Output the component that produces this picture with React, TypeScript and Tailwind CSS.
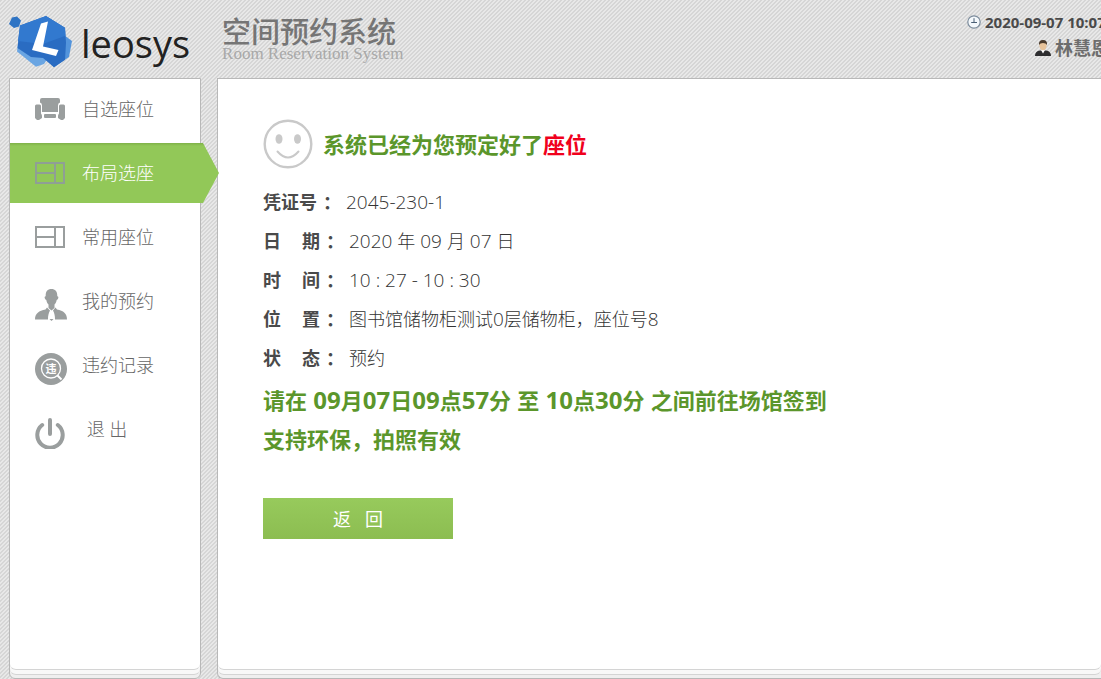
import React from 'react';
import { clsx } from 'clsx';

const SofaIcon = () => (
  <svg viewBox="0 0 30 22" className="w-[30px] h-[22px]" fill="#9a9e9e">
    <path d="M7 0h16q2 0 2 2v2.500q-2 .5-2 3V14H7V7.500q0-2.500-2-3V2q0-2 2-2z" />
    <path d="M1.500 6.500h3q1.500 0 1.500 1.500v7.500q1 1 1 2.500v2l-3 2H2l-2-2V8q0-1.500 1.500-1.500zM28.500 6.500h-3Q24 6.500 24 8v7.500q-1 1-1 2.500v2l3 2h2l2-2V8q0-1.500-1.500-1.500z" />
    <rect x="9" y="16" width="12" height="4" rx="1" />
  </svg>
);

const LayoutIcon = ({ color = '#9a9e9e' }: { color?: string }) => (
  <svg viewBox="0 0 30 22" className="w-[30px] h-[22px]" fill="none" stroke={color} strokeWidth="2">
    <path d="M1 1h28v20H1zM20 1v20M1 11h19" />
  </svg>
);

const PersonIcon = () => (
  <svg viewBox="0 0 32 32" className="w-8 h-8" fill="#9a9e9e">
    <path d="M16.500 0c3.500 0 6 2.500 5.800 7.200 1.200 0 1.300 1.300.8 2.300-.4 1-.9 1.300-1.400 1.500-.4 2-1.200 3.500-2.200 4.500v3.500l-3 2.500-3-2.500v-3.500c-1-1-1.800-2.500-2.200-4.500-.5-.2-1-.5-1.400-1.500-.5-1-.4-2.300.8-2.300C10.500 2.500 12.500 0 16.500 0z" />
    <path d="M12 18.500l-1.500 2C4 22 0 24 0 30.500h13c0-4 .5-6 2-9zM20.500 18.500l1.500 2c6.500 1.500 10 3.500 10 10H20c0-4-.5-6-2-9zM14.500 30h4l-2 2z" />
  </svg>
);

const RecordIcon = () => (
  <svg viewBox="0 0 32 32" className="w-8 h-8">
    <circle cx="16" cy="16" r="16" fill="#9a9e9e" />
    <circle cx="16" cy="15.500" r="9.500" fill="none" stroke="#fff" strokeWidth="1.300" />
    <path d="M22.500 22.500l4 4" stroke="#fff" strokeWidth="2" />
    <text x="16" y="19.500" textAnchor="middle" fontSize="11" fontWeight="bold" fill="#fff">违</text>
  </svg>
);

const PowerIcon = () => (
  <svg viewBox="0 0 30 31" className="w-[30px] h-[31px]" fill="none" stroke="#9a9e9e" strokeWidth="4" strokeLinecap="round">
    <path d="M15 2v14M7.200 7a12.700 12.700 0 1 0 15.600 0" />
  </svg>
);

const SmileIcon = () => (
  <svg viewBox="0 0 50 50" className="w-[50px] h-[50px]" fill="none" stroke="#c9c9c9">
    <circle cx="25" cy="25" r="23.300" strokeWidth="2.400" />
    <ellipse cx="16" cy="20" rx="3.500" ry="4.800" fill="#c9c9c9" stroke="none" />
    <ellipse cx="34.500" cy="20" rx="3.500" ry="4.800" fill="#c9c9c9" stroke="none" />
    <path d="M14.500 32.500q10.500 12 21 0" strokeWidth="2" strokeLinecap="round" />
  </svg>
);

const LogoMark = () => (
  <svg viewBox="0 0 64 52" className="w-16 h-[52px] shrink-0">
    <path d="M3 1.500l5-1 4 4-2 6-5 1.500L0 8z" fill="#2f74c4" />
    <path d="M10 20L8 35.500l19 15.200 8-2.700 4-6-5-14z" fill="#6aa5e2" />
    <path d="M55 19l8 6-3 16-15 10.300-8-8z" fill="#5394dc" />
    <path d="M11 9.500L37 0l19 11.700 1 15-1 17-11 7.600L34 42l-12-1-13.500-9z" fill="#2a6cc2" />
    <path d="M11 9.500L37 0l19 11.700.5 8L34 28l-25-3z" fill="#3279cf" />
    <path d="M32 7.500l7-2-5 25 15.500 3.500-2.500 6-24-6z" fill="#fff" />
  </svg>
);

const ClockIcon = () => (
  <svg viewBox="0 0 14 14" className="w-3.5 h-3.5 shrink-0" fill="none">
    <circle cx="7" cy="7" r="6.200" fill="#f4f8fb" stroke="#7b8b9b" strokeWidth="1.200" />
    <path d="M7 3.200V7.500H4.200M7 7.500h3" stroke="#4a5f75" />
  </svg>
);

const UserIcon = () => (
  <svg viewBox="0 0 16 16" className="w-4 h-4 shrink-0">
    <path d="M0 16q0-5 5-5.500h6q5 .5 5 5.500z" fill="#2d2d2f" />
    <path d="M6 10l2 3.500 2-3.500z" fill="#fff" />
    <ellipse cx="8" cy="5.500" rx="3.600" ry="4.800" fill="#e8c39a" />
    <path d="M4 5Q3.500 0 8 0t4 5q-1-2-4-2T4 5z" fill="#4a3a2c" />
  </svg>
);

const menu = [
  { label: '自选座位', icon: <SofaIcon /> },
  { label: '布局选座', icon: <LayoutIcon color="#8f9f95" />, active: true },
  { label: '常用座位', icon: <LayoutIcon /> },
  { label: '我的预约', icon: <PersonIcon />, tall: true },
  { label: '违约记录', icon: <RecordIcon />, tall: true },
  { label: ' 退 出', icon: <PowerIcon />, tall: true },
];

const details = [
  { label: ['凭证号'], value: '2045-230-1' },
  { label: ['日', '期'], value: '2020 年 09 月 07 日' },
  { label: ['时', '间'], value: '10 : 27 - 10 : 30' },
  { label: ['位', '置'], value: '图书馆储物柜测试0层储物柜，座位号8' },
  { label: ['状', '态'], value: '预约' },
];

// Digits and spaces are set a little larger than the Chinese text around them
const MixedText = ({ text, latinClass }: { text: string; latinClass: string }) => (
  <>
    {text.split(/([\x20-\x7e]+)/).map((part, i) =>
      i % 2 ? <span key={i} className={latinClass}>{part}</span> : part
    )}
  </>
);

// White sheet with two more sheets showing under its bottom edge
const Sheet = ({ className, children }: { className?: string; children: React.ReactNode }) => (
  <div className={clsx('flex flex-col border border-[#b8b8b8] rounded-b-md bg-[#efefef] pb-[3px]', className)}>
    <div className="grow flex flex-col rounded-b-md border-b border-[#d4d4d4] bg-[#f8f8f8] pb-1">
      <div className="grow rounded-b-md border-b border-[#d4d4d4] bg-white">{children}</div>
    </div>
  </div>
);

const Header = () => (
  <header className="flex h-[78px] shrink-0 overflow-hidden whitespace-nowrap pl-[9px]">
    <a href="#" className="flex items-start pt-4">
      <LogoMark />
      <span className="ml-2 text-[38px] leading-[54px] text-[#222]">leosys</span>
    </a>
    <div className="ml-8 pt-[18px]">
      <h1 className="text-[29px] leading-7 font-medium text-[#757575]">空间预约系统</h1>
      <p className="font-['Liberation_Serif',serif] text-[17px] leading-4 text-[#a8a8a8]">Room Reservation System</p>
    </div>
    <div className="ml-auto w-[134px] shrink-0 pt-2.5 font-bold">
      <div className="flex items-center gap-1 text-[15px] leading-6 text-[#4a4a4a]">
        <ClockIcon />
        <span>2020-09-07 10:07</span>
      </div>
      <div className="flex items-center gap-1 pl-[68px] text-lg leading-7 text-[#6d6d6d]">
        <UserIcon />
        <span>林慧恩</span>
      </div>
    </div>
  </header>
);

const Sidebar = () => (
  <Sheet className="relative z-10 w-48 shrink-0">
    <nav className="flex flex-col gap-1">
      {menu.map((item) => (
        <a
          key={item.label}
          href="#"
          className={clsx(
            'flex h-[60px] items-center pl-[25px] text-lg font-light whitespace-pre',
            item.active
              ? '-mr-[19px] bg-linear-to-b from-[#7fb148] from-0% via-[#92c858] via-5% to-[#92c858] text-white [clip-path:polygon(0_0,calc(100%-16px)_0,100%_50%,calc(100%-16px)_100%,0_100%)]'
              : 'text-[#666]'
          )}
        >
          <span className={clsx('flex w-[47px]', item.tall && 'pt-2')}>{item.icon}</span>
          {item.label}
        </a>
      ))}
    </nav>
  </Sheet>
);

const App = () => {
  return (
    <div className="flex min-h-screen flex-col overflow-hidden bg-[linear-gradient(135deg,#d6d6d6_25%,#e8e8e8_25%,#e8e8e8_50%,#d6d6d6_50%,#d6d6d6_75%,#e8e8e8_75%)] bg-size-[4px_4px] font-['Open_Sans','Noto_Sans_CJK_SC',sans-serif]">
      <Header />
      <div className="flex grow gap-4 pl-[9px]">
        <Sidebar />
        <Sheet className="min-w-0 grow border-r-0 rounded-br-none">
          <main className="pl-[45px] pt-10 text-lg text-[#4a4a4a]">
            <h2 className="flex items-center gap-[10px] text-[22px] font-bold text-[#5b962b]">
              <SmileIcon />
              <span>系统已经为您预定好了<span className="text-[#f0001c]">座位</span></span>
            </h2>
            <dl className="mt-3.5">
              {details.map((row) => (
                <div key={row.value} className="flex h-[39px] leading-[39px]">
                  <dt className="flex font-bold">
                    <span className="flex gap-[21px]">
                      {row.label.map((part) => <span key={part}>{part}</span>)}
                    </span>
                    <span className="ml-1.5">：</span>
                  </dt>
                  <dd className="ml-[5px] font-light text-[#333]">
                    <MixedText text={row.value} latinClass="text-[19px]" />
                  </dd>
                </div>
              ))}
            </dl>
            <div className="mt-[3px] text-[22px] leading-[39px] font-bold text-[#5b962b]">
              <p><MixedText text="请在 09月07日09点57分 至 10点30分 之间前往场馆签到" latinClass="text-2xl leading-[38px]" /></p>
              <p>支持环保，拍照有效</p>
            </div>
            <button className="mt-[39px] h-[41px] w-[190px] bg-linear-to-b from-[#97ca5c] to-[#8cbd51] whitespace-pre text-white">
              返   回
            </button>
          </main>
        </Sheet>
      </div>
    </div>
  );
};

export default App;
